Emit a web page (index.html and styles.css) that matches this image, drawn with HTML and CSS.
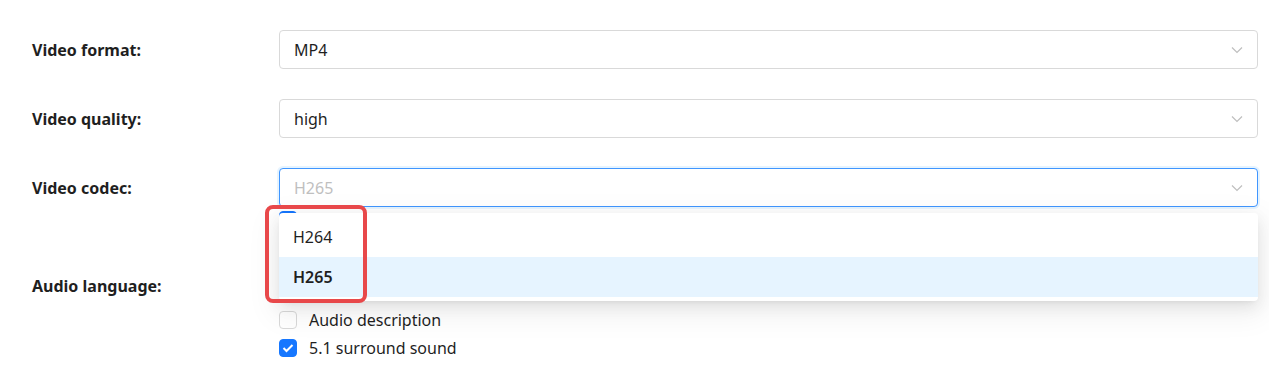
FILE: index.html
```html
<!DOCTYPE html>
<html lang="en">
<head>
    <meta charset="UTF-8">
    <meta name="viewport" content="width=device-width, initial-scale=1.0">
    <title>Video settings</title>
    <link rel="stylesheet" href="styles.css">
</head>
<body>
    <form class="form">
        <div class="row">
            <label class="label">Video format:</label>
            <div class="select">
                <span class="select-value">MP4</span>
                <svg class="arrow" width="12" height="8" viewBox="0 0 12 8"><path d="M1 1.5 L6 6.5 L11 1.5" fill="none" stroke="#bfbfbf" stroke-width="1.2"/></svg>
            </div>
        </div>
        <div class="row">
            <label class="label">Video quality:</label>
            <div class="select">
                <span class="select-value">high</span>
                <svg class="arrow" width="12" height="8" viewBox="0 0 12 8"><path d="M1 1.5 L6 6.5 L11 1.5" fill="none" stroke="#bfbfbf" stroke-width="1.2"/></svg>
            </div>
        </div>
        <div class="row row-codec">
            <label class="label">Video codec:</label>
            <div class="select-wrap">
                <div class="select select-focused">
                    <span class="select-value placeholder">H265</span>
                    <svg class="arrow" width="12" height="8" viewBox="0 0 12 8"><path d="M1 1.5 L6 6.5 L11 1.5" fill="none" stroke="#bfbfbf" stroke-width="1.2"/></svg>
                </div>
                <div class="dropdown">
                    <div class="option">H264</div>
                    <div class="option option-active">H265</div>
                </div>
                <div class="highlight"></div>
            </div>
        </div>
        <div class="row row-audio">
            <label class="label label-audio">Audio language:</label>
            <div class="checks">
                <div class="check check-first"><span class="box box-checked"><svg width="12" height="10" viewBox="0 0 12 10"><path d="M1.5 5 L4.5 8 L10.5 2" fill="none" stroke="#fff" stroke-width="2"/></svg></span></div>
                <div class="check"><span class="box"></span></div>
                <div class="check"><span class="box"></span></div>
                <div class="check"><span class="box"></span></div>
                <div class="check"><span class="box"></span>Audio description</div>
                <div class="check"><span class="box box-checked"><svg width="12" height="10" viewBox="0 0 12 10"><path d="M1.5 5 L4.5 8 L10.5 2" fill="none" stroke="#fff" stroke-width="2"/></svg></span>5.1 surround sound</div>
            </div>
        </div>
    </form>
</body>
</html>
```

FILE: styles.css
```css
body {
    margin: 0;
    background-color: #fff;
    font-family: 'Noto Sans', 'Open Sans', sans-serif;
    color: #1f1f1f;
}

.form {
    padding: 30px 11px 0 32px;
}

.row {
    display: grid;
    grid-template-columns: 247px 1fr;
    align-items: center;
    margin-bottom: 30px;
}

.row-codec {
    margin-bottom: 0;
}

.label {
    font-size: 16px;
    font-weight: bold;
    color: #1f1f1f;
}

.label-audio {
    padding-top: 4px;
}

.select-wrap {
    position: relative;
}

.select {
    display: flex;
    align-items: center;
    justify-content: space-between;
    height: 39px;
    box-sizing: border-box;
    padding: 0 14px;
    border: 1px solid #d9d9d9;
    border-radius: 4px;
    background-color: #fff;
    font-size: 16px;
}

.select-focused {
    border-color: #4096ff;
    box-shadow: 0 0 0 2px rgba(5, 145, 255, 0.1);
}

.placeholder {
    color: #bfbfbf;
}

.arrow {
    display: block;
}

.dropdown {
    position: absolute;
    top: 45px;
    left: 0;
    right: 0;
    z-index: 2;
    padding: 4px 0;
    background-color: #fff;
    border-radius: 4px;
    box-shadow: 0 6px 16px rgba(0, 0, 0, 0.08), 0 3px 6px -4px rgba(0, 0, 0, 0.12), 0 9px 28px 8px rgba(0, 0, 0, 0.05);
}

.option {
    height: 40px;
    line-height: 40px;
    padding: 0 14px;
    font-size: 16px;
}

.option-active {
    background-color: #e6f4ff;
    font-weight: 600;
}

.highlight {
    position: absolute;
    top: 37px;
    left: -14px;
    width: 94px;
    height: 90px;
    z-index: 3;
    border: 4px solid #e8484a;
    border-radius: 8px;
}

.checks {
    display: flex;
    flex-direction: column;
}

.check {
    display: flex;
    align-items: center;
    height: 28px;
    font-size: 16px;
    color: #1f1f1f;
}

.check-first {
    height: 18px;
    margin-top: 4px;
    margin-bottom: -7.5px;
}

.box {
    display: flex;
    align-items: center;
    justify-content: center;
    width: 18px;
    height: 18px;
    box-sizing: border-box;
    margin-right: 12px;
    border: 1px solid #d9d9d9;
    border-radius: 4px;
    background-color: #fff;
}

.box-checked {
    border-color: #1677ff;
    background-color: #1677ff;
}
```
